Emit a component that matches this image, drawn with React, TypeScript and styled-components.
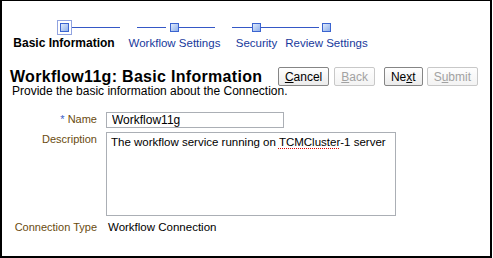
import React from 'react'
import styled, { createGlobalStyle } from 'styled-components'

const GlobalStyle = createGlobalStyle`
  body {
    margin: 0;
    background: #fff;
    font-family: 'Liberation Sans', Arial, sans-serif;
    color: #000;
  }
`

const Frame = styled.div`
  box-sizing: border-box;
  width: 492px;
  height: 258px;
  border: solid #000;
  border-width: 1px 2px 2px 2px;
  padding-top: 19px;
`

const Track = styled.svg`
  display: block;
`

const StopLabels = styled.div`
  display: flex;
  padding-left: 7px;
  height: 14px;
`

// each cell is centred on its stop square, the label may spill over both sides
const StopCell = styled.div<{ $width: number }>`
  display: flex;
  justify-content: center;
  width: ${({ $width }) => $width}px;
  flex-shrink: 0;
`

const StopLabel = styled.span<{ $current?: boolean }>`
  font-size: ${({ $current }) => ($current ? '12px' : '11.5px')};
  line-height: 14px;
  font-weight: ${({ $current }) => ($current ? 'bold' : 'normal')};
  color: ${({ $current }) => ($current ? '#000' : '#17399c')};
  white-space: nowrap;
`

const Header = styled.div`
  display: flex;
  align-items: center;
  justify-content: space-between;
  height: 19px;
  margin-top: 17px;
  padding: 0 12px 0 8px;
`

const Title = styled.h1`
  margin: 0;
  font-size: 16px;
  line-height: 16px;
  font-weight: bold;
  letter-spacing: 0.3px;
`

const Buttons = styled.div`
  display: flex;
`

const Button = styled.button<{ $space: number }>`
  box-sizing: border-box;
  height: 19px;
  margin: 0 0 0 ${({ $space }) => $space}px;
  padding: 0 6px;
  font-family: 'Liberation Sans', Arial, sans-serif;
  font-size: 12px;
  color: #000;
  border: 1px solid #858585;
  border-radius: 2px;
  background: linear-gradient(#ffffff, #ebebeb);

  &:disabled {
    color: #a2a2a2;
    border-color: #c8c8c8;
    background: linear-gradient(#fefefe, #f3f3f3);
  }
`

const Intro = styled.p`
  margin: -1.5px 0 0;
  padding-left: 10px;
  font-size: 12px;
  line-height: 12px;
`

const Form = styled.div`
  display: grid;
  grid-template-columns: 95px auto;
  column-gap: 9px;
  row-gap: 4px;
  justify-content: start;
  align-items: start;
  margin-top: 15.5px;
`

const Label = styled.label`
  text-align: right;
  font-size: 11px;
  line-height: 14px;
  color: #6a4b0f;
`

const Required = styled.span`
  color: #3a60c8;
`

const TextInput = styled.input`
  box-sizing: border-box;
  width: 178px;
  height: 16px;
  margin: 0;
  padding: 0 5px;
  border: 1px solid #abafb5;
  font-family: 'Liberation Sans', Arial, sans-serif;
  font-size: 12px;
  color: #000;
  outline: none;
`

const TextArea = styled.div`
  box-sizing: border-box;
  width: 290px;
  height: 84px;
  padding: 2px 4px;
  border: 1px solid #abafb5;
  font-size: 11.5px;
  line-height: 14px;
`

const Misspelled = styled.span`
  text-decoration: underline dotted #e00000;
  text-underline-offset: 2px;
`

const Value = styled.span`
  padding-left: 2px;
  font-size: 11.5px;
  line-height: 14px;
`

const stops = [
  { name: 'Basic Information', width: 110, current: true },
  { name: 'Workflow Settings', width: 111 },
  { name: 'Security', width: 53 },
  { name: 'Review Settings', width: 87 },
]

const StopBox = ({ x }: { x: number }) => (
  <rect x={x + 0.5} y={23.5} width={8} height={8} fill="url(#stopFill)" stroke="#3b64d0" />
)

const TrainTrack = () => (
  <Track width={340} height={16} viewBox="2 20 340 16">
    <defs>
      <linearGradient id="stopFill" x1="0" y1="0" x2="1" y2="1">
        <stop offset="0" stopColor="#e4eefc" />
        <stop offset="1" stopColor="#8aace9" />
      </linearGradient>
    </defs>
    <rect x={57.5} y={20.5} width={14} height={14} fill="none" stroke="#2346c0" strokeDasharray="1 1" />
    <g stroke="#3558c6">
      <line x1={72} y1={27.5} x2={120} y2={27.5} />
      <line x1={137} y1={27.5} x2={166} y2={27.5} />
      <line x1={179} y1={27.5} x2={215} y2={27.5} />
      <line x1={232} y1={27.5} x2={252} y2={27.5} />
      <line x1={261} y1={27.5} x2={319} y2={27.5} />
    </g>
    <StopBox x={60} />
    <StopBox x={170} />
    <StopBox x={252} />
    <StopBox x={322} />
  </Track>
)

const App = () => (
  <>
    <GlobalStyle />
    <Frame>
      <TrainTrack />
      <StopLabels>
        {stops.map((s) => (
          <StopCell key={s.name} $width={s.width}>
            <StopLabel $current={s.current}>{s.name}</StopLabel>
          </StopCell>
        ))}
      </StopLabels>

      <Header>
        <Title>Workflow11g: Basic Information</Title>
        <Buttons>
          <Button $space={0}>
            <u>C</u>ancel
          </Button>
          <Button $space={5} disabled>
            <u>B</u>ack
          </Button>
          <Button $space={9}>
            Ne<u>x</u>t
          </Button>
          <Button $space={4} disabled>
            S<u>u</u>bmit
          </Button>
        </Buttons>
      </Header>

      <Intro>Provide the basic information about the Connection.</Intro>

      <Form>
        <Label htmlFor="wf-name">
          <Required>*</Required> Name
        </Label>
        <TextInput id="wf-name" defaultValue="Workflow11g" />

        <Label>Description</Label>
        <TextArea>
          The workflow service running on <Misspelled>TCMCluster</Misspelled>-1 server
        </TextArea>

        <Label>Connection Type</Label>
        <Value>Workflow Connection</Value>
      </Form>
    </Frame>
  </>
)

export default App
